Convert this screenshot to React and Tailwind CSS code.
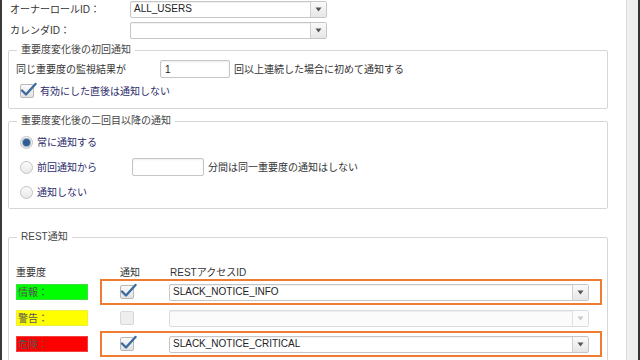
import React from 'react';

function Select({ value, width, disabled }) {
  return (
    <div
      className={`flex h-[17px] items-stretch rounded-[2px] border ${disabled ? 'border-[#dcdcdc] bg-[#fbfbfb]' : 'border-[#c6c6c6] bg-white'} shadow-[inset_0_1px_1px_rgba(0,0,0,0.06)]`}
      style={{ width }}
    >
      <div className="flex flex-1 items-center pl-[3px] text-[10px] leading-none text-[#222]">{value}</div>
      <div className={`flex w-[16px] items-center justify-center border-l ${disabled ? 'border-[#e2e2e2] bg-[#fbfbfb] text-[#c8c8c8]' : 'border-[#d0d0d0] bg-gradient-to-b from-[#fafafa] to-[#e6e6e6] text-[#555]'}`}>
        <svg width="7" height="5" viewBox="0 0 7 5"><path d="M0.5 0.5h6L3.5 4.5z" fill="currentColor" /></svg>
      </div>
    </div>
  );
}

function Checkbox({ checked, disabled }) {
  return (
    <div className="relative h-[14px] w-[14px]">
      <div className={`h-full w-full rounded-[2px] border ${disabled ? 'border-[#d8d8d8] bg-[#eeeeee]' : 'border-[#b8b8b8] bg-gradient-to-b from-[#fafafa] to-[#e2e2e2]'}`} />
      {checked && (
        <svg className="absolute left-[0px] top-[-2px]" width="17" height="16" viewBox="0 0 17 16">
          <path d="M2 8.5 L6 12.5 L15.5 2" fill="none" stroke="#3d6b9f" strokeWidth="2.4" strokeLinecap="round" strokeLinejoin="round" />
        </svg>
      )}
    </div>
  );
}

function Radio({ checked }) {
  return (
    <div className="flex h-[13px] w-[13px] items-center justify-center rounded-full border border-[#c2c2c2] bg-gradient-to-b from-[#fbfbfb] to-[#e8e8e8]">
      {checked && <div className="h-[7px] w-[7px] rounded-full bg-[#2f5d91] shadow-[0_0_0_1px_#8fa7c4]" />}
    </div>
  );
}

function Input({ value, width }) {
  return (
    <div
      className="flex h-[18px] items-center rounded-[2px] border border-[#c6c6c6] bg-white pl-[4px] text-[10px] text-[#222] shadow-[inset_0_1px_2px_rgba(0,0,0,0.08)]"
      style={{ width }}
    >
      {value}
    </div>
  );
}

function Fieldset({ title, className, children }) {
  return (
    <fieldset className={`rounded-[2px] border border-[#d6d6d6] ${className}`}>
      <legend className="ml-[8px] px-[4px] text-[10px] leading-[14px] text-[#444]">{title}</legend>
      {children}
    </fieldset>
  );
}

const rows = [
  { label: '情報：', bg: 'bg-[#00ff00] border-[#3ee03e]', checked: true, value: 'SLACK_NOTICE_INFO', hl: true },
  { label: '警告：', bg: 'bg-[#ffff00] border-[#eeee40]', checked: false, value: '', hl: false, disabled: true },
  { label: '危険：', bg: 'bg-[#ff0000] border-[#f04040]', checked: true, value: 'SLACK_NOTICE_CRITICAL', hl: true },
];

export default function App() {
  return (
    <div
      className="flex h-[360px] w-[640px] overflow-hidden bg-white text-[#333]"
      style={{ fontFamily: '"Liberation Sans", "Noto Sans CJK JP", sans-serif' }}
    >
      <div className="w-[2px] bg-[#3a3a3a]" />
      <div className="flex-1 pl-[6px]">
        <div className="flex h-[18px] items-center pl-[2px] text-[10px]">
          <div className="w-[120px]">オーナーロールID：</div>
          <Select value="ALL_USERS" width={197} />
        </div>
        <div className="mt-[3px] flex h-[18px] items-center pl-[2px] text-[10px]">
          <div className="w-[120px]">カレンダID：</div>
          <Select value="" width={197} />
        </div>

        <Fieldset title="重要度変化後の初回通知" className="mt-[4px] w-[600px] pb-[10px] text-[10px]">
          <div className="mt-[3px] flex h-[18px] items-center pl-[7px]">
            <div className="w-[144px]">同じ重要度の監視結果が</div>
            <Input value="1" width={70} />
            <div className="ml-[4px]">回以上連続した場合に初めて通知する</div>
          </div>
          <div className="mt-[6px] flex h-[14px] items-center pl-[11px]">
            <Checkbox checked />
            <div className="ml-[6px] text-[#2c2c6c]">有効にした直後は通知しない</div>
          </div>
        </Fieldset>

        <Fieldset title="重要度変化後の二回目以降の通知" className="mt-[5px] w-[600px] pb-[7px] text-[10px]">
          <div className="flex flex-col gap-[7px] pl-[11px] pt-[5px]">
            <div className="flex h-[18px] items-center">
              <Radio checked />
              <div className="ml-[4px] text-[#2c2c6c]">常に通知する</div>
            </div>
            <div className="flex h-[18px] items-center">
              <Radio />
              <div className="ml-[4px] w-[95px] text-[#2c2c6c]">前回通知から</div>
              <Input value="" width={72} />
              <div className="ml-[4px]">分間は同一重要度の通知はしない</div>
            </div>
            <div className="flex h-[18px] items-center">
              <Radio />
              <div className="ml-[4px] text-[#2c2c6c]">通知しない</div>
            </div>
          </div>
        </Fieldset>

        <Fieldset title="REST通知" className="mt-[21px] w-[600px] pb-[10px] text-[10px]">
          <div className="mt-[21px] flex h-[14px] items-center pl-[7px]">
            <div className="w-[104px]">重要度</div>
            <div className="w-[50px]">通知</div>
            <div>RESTアクセスID</div>
          </div>
          {rows.map((r) => (
            <div key={r.label} className="flex h-[26px] items-center pl-[7px]">
              <div className={`flex h-[16px] w-[72px] items-center border pl-[1px] text-[#555] ${r.bg}`}>{r.label}</div>
              <div className={`ml-[12px] flex h-full w-[502px] items-center border-2 ${r.hl ? 'border-[#ee7d31]' : 'border-transparent'}`}>
                <div className="ml-[18px]">
                  <Checkbox checked={r.checked} disabled={r.disabled} />
                </div>
                <div className="ml-[35px]">
                  <Select value={r.value} width={420} disabled={r.disabled} />
                </div>
              </div>
            </div>
          ))}
        </Fieldset>
      </div>
      <div className="w-[12px] border-l border-[#dcdcdc] bg-[#efefef]" />
      <div className="w-[2px] bg-[#333]" />
    </div>
  );
}
